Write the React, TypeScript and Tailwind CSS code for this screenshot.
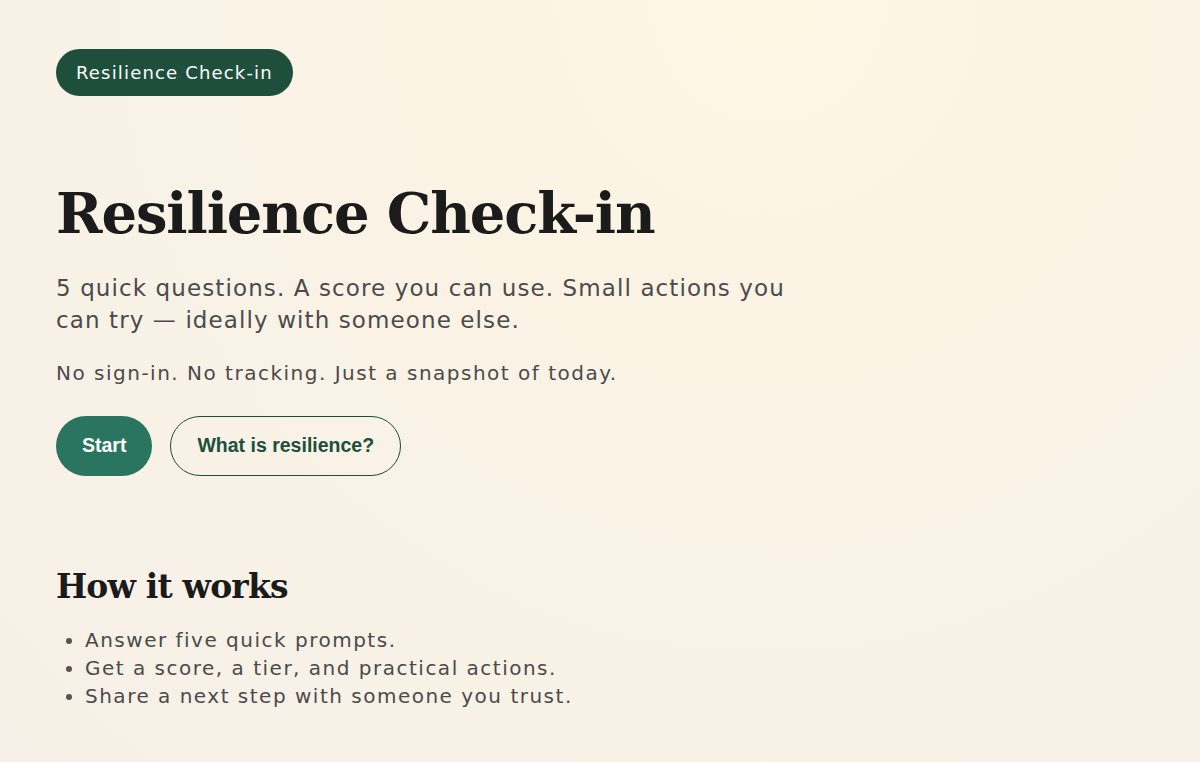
import React from "react";

const sans = "font-['DejaVu_Sans',sans-serif] tracking-[0.075em]";
const serif = "font-['DejaVu_Serif',serif]";

export default function App() {
  return (
    <div className="min-h-[762px] w-full bg-[radial-gradient(ellipse_at_64%_0%,#fdf6e3_0%,#f9f2e6_55%,#f6f0e8_100%)]">
      <main className="px-[56px] pt-[49px] pb-16">
        <span className={`inline-flex h-[47px] items-center rounded-full bg-[#1d4f3c] px-[20px] text-[18px] text-white font-['DejaVu_Sans',sans-serif] tracking-[0.065em]`}>
          Resilience Check-in
        </span>

        <h1 className={`mt-[83px] text-[56px] font-bold leading-[68px] tracking-[-0.02em] text-[#1b1b1b] ${serif}`}>
          Resilience Check-in
        </h1>

        <p className={`mt-[25px] max-w-[760px] text-[23px] leading-[32px] text-[#4b4b4b] font-['DejaVu_Sans',sans-serif] tracking-[0.048em]`}>
          5 quick questions. A score you can use. Small actions you can try — ideally with someone else.
        </p>
        <p className={`mt-[21px] text-[20px] leading-[32px] text-[#4b4b4b] ${sans}`}>
          No sign-in. No tracking. Just a snapshot of today.
        </p>

        <div className="mt-[27px] flex items-center gap-[18px] font-['Liberation_Sans',Arial,sans-serif]">
          <button className="h-[60px] rounded-full bg-[#2a7560] px-[26px] text-[19.5px] font-bold text-white">
            Start
          </button>
          <button className="h-[60px] rounded-full border-[1.5px] border-[#1d4f3c] px-[26px] text-[19.5px] font-bold text-[#1d4f3c]">
            What is resilience?
          </button>
        </div>

        <h2 className={`mt-[91px] text-[33px] font-bold leading-[40px] tracking-[-0.025em] text-[#1b1b1b] ${serif}`}>
          How it works
        </h2>
        <ul className={`mt-[19px] list-disc pl-[29px] text-[20px] leading-[28px] text-[#4b4b4b] marker:text-[#555] ${sans}`}>
          <li>Answer five quick prompts.</li>
          <li>Get a score, a tier, and practical actions.</li>
          <li>Share a next step with someone you trust.</li>
        </ul>
      </main>
    </div>
  );
}
